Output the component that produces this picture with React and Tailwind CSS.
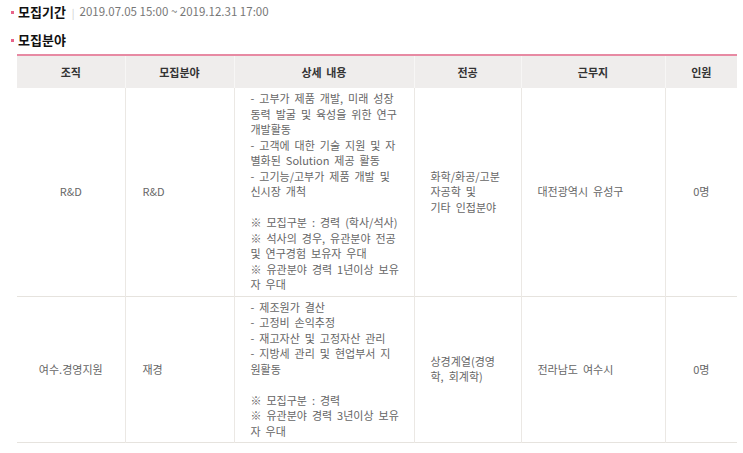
const jobs = [
  {
    org: "R&D",
    field: "R&D",
    detail: [
      "- 고부가 제품 개발, 미래 성장",
      "동력 발굴 및 육성을 위한 연구",
      "개발활동",
      "- 고객에 대한 기술 지원 및 자",
      "별화된 Solution 제공 활동",
      "- 고기능/고부가 제품 개발 및",
      "신시장 개척",
      "",
      "※ 모집구분 : 경력 (학사/석사)",
      "※ 석사의 경우, 유관분야 전공",
      "및 연구경험 보유자 우대",
      "※ 유관분야 경력 1년이상 보유",
      "자 우대",
    ],
    major: ["화학/화공/고분", "자공학 및", "기타 인접분야"],
    place: "대전광역시 유성구",
    count: "0명",
  },
  {
    org: "여수.경영지원",
    field: "재경",
    detail: [
      "- 제조원가 결산",
      "- 고정비 손익추정",
      "- 재고자산 및 고정자산 관리",
      "- 지방세 관리 및 현업부서 지",
      "원활동",
      "",
      "※ 모집구분 : 경력",
      "※ 유관분야 경력 3년이상 보유",
      "자 우대",
    ],
    major: ["상경계열(경영", "학, 회계학)"],
    place: "전라남도 여수시",
    count: "0명",
  },
]

const Lines = ({ lines }) => (
  <>
    {lines.map((l, i) => (
      <div key={i} className="whitespace-nowrap h-[15.5px]">{l}</div>
    ))}
  </>
)

const Bullet = () => <span className="w-[3px] h-[3px] bg-[#e8638a] mr-[4px]" />

export default function App() {
  return (
    <div className="w-[743px] h-[453px] bg-white overflow-hidden pl-[11px]" style={{ fontFamily: '"Noto Sans CJK KR", "Noto Sans", sans-serif' }}>
      <div className="h-[24px] flex items-center">
        <Bullet />
        <span className="text-[13px] font-bold text-[#111]">모집기간</span>
        <span className="text-[10px] text-[#ccc] ml-[6px] mr-[5px]">|</span>
        <span className="text-[11.5px] text-[#777]">2019.07.05 15:00 ~ 2019.12.31 17:00</span>
      </div>
      <div className="h-[24px] mt-[4px] flex items-center">
        <Bullet />
        <span className="text-[13px] font-bold text-[#111]">모집분야</span>
      </div>
      <table className="mt-[2px] ml-[6px] w-[720px] border-collapse table-fixed border-t-2 border-[#e78aa3]">
        <colgroup>
          <col className="w-[108px]" />
          <col className="w-[109px]" />
          <col className="w-[180px]" />
          <col className="w-[107px]" />
          <col className="w-[144px]" />
          <col className="w-[72px]" />
        </colgroup>
        <thead>
          <tr className="bg-[#efedec] h-[33px] text-[11px] font-bold text-[#333]">
            {["조직", "모집분야", "상세 내용", "전공", "근무지", "인원"].map((h, i) => (
              <th key={h} className={`text-center font-bold p-0 [word-spacing:2px] ${i > 0 ? "border-l border-[#f7f6f5]" : ""}`}>{h}</th>
            ))}
          </tr>
        </thead>
        <tbody className="text-[11px] text-[#666] leading-[15.5px] [word-spacing:2.5px]">
          {jobs.map((j) => (
            <tr key={j.org} className="border-b border-[#e6e3de]">
              <td className="text-center align-middle py-[3px]">{j.org}</td>
              <td className="border-l border-[#ebe8e4] pl-[17px] align-middle">{j.field}</td>
              <td className="border-l border-[#ebe8e4] pl-[16px] py-[3px] align-middle">
                <Lines lines={j.detail} />
              </td>
              <td className="border-l border-[#ebe8e4] pl-[16px] align-middle">
                <Lines lines={j.major} />
              </td>
              <td className="border-l border-[#ebe8e4] pl-[16px] align-middle whitespace-nowrap">{j.place}</td>
              <td className="border-l border-[#ebe8e4] text-center align-middle">{j.count}</td>
            </tr>
          ))}
        </tbody>
      </table>
    </div>
  )
}
